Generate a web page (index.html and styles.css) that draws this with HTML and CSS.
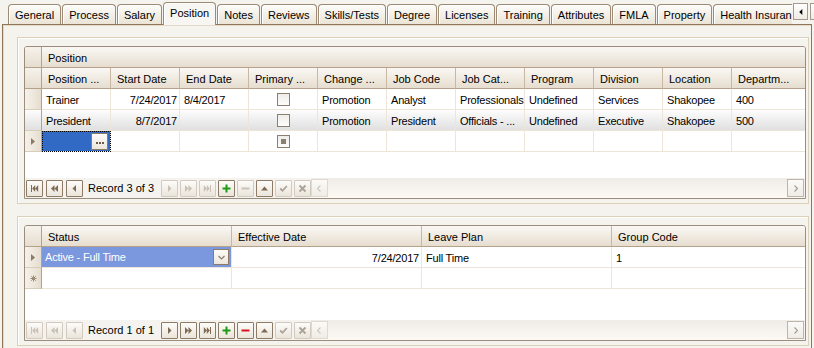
FILE: index.html
```html
<!DOCTYPE html>
<html lang="en">
<head>
    <meta charset="UTF-8">
    <title>Employee - Position</title>
    <link rel="stylesheet" href="styles.css">
</head>
<body>
    <div class="tabstrip">
        <div class="tabs">
            <div class="tab">General</div>
            <div class="tab">Process</div>
            <div class="tab">Salary</div>
            <div class="tab active">Position</div>
            <div class="tab">Notes</div>
            <div class="tab">Reviews</div>
            <div class="tab">Skills/Tests</div>
            <div class="tab">Degree</div>
            <div class="tab">Licenses</div>
            <div class="tab">Training</div>
            <div class="tab">Attributes</div>
            <div class="tab">FMLA</div>
            <div class="tab">Property</div>
            <div class="tab">Health Insurance</div>
        </div>
        <div class="tab-scroll">
            <span class="scroll-btn"><svg viewBox="0 0 9 9"><path d="M6 1v7L2.5 4.5z"/></svg></span>
            <span class="scroll-btn"></span>
        </div>
    </div>

    <div class="panel">
        <!-- position history -->
        <div class="groupbox">
            <div class="grid grid-position">
                <div class="sheet">
                    <div class="row">
                        <div class="cell head ind"></div>
                        <div class="cell head band">Position</div>
                    </div>
                    <div class="row">
                        <div class="cell head ind"></div>
                        <div class="cell head">Position ...</div>
                        <div class="cell head">Start Date</div>
                        <div class="cell head">End Date</div>
                        <div class="cell head">Primary ...</div>
                        <div class="cell head">Change ...</div>
                        <div class="cell head">Job Code</div>
                        <div class="cell head">Job Cat...</div>
                        <div class="cell head">Program</div>
                        <div class="cell head">Division</div>
                        <div class="cell head">Location</div>
                        <div class="cell head">Departm...</div>
                    </div>
                    <div class="row">
                        <div class="cell ind"></div>
                        <div class="cell">Trainer</div>
                        <div class="cell num">7/24/2017</div>
                        <div class="cell">8/4/2017</div>
                        <div class="cell center"><span class="check"></span></div>
                        <div class="cell">Promotion</div>
                        <div class="cell">Analyst</div>
                        <div class="cell">Professionals</div>
                        <div class="cell">Undefined</div>
                        <div class="cell">Services</div>
                        <div class="cell">Shakopee</div>
                        <div class="cell">400</div>
                    </div>
                    <div class="row hot">
                        <div class="cell ind"></div>
                        <div class="cell">President</div>
                        <div class="cell num">8/7/2017</div>
                        <div class="cell"></div>
                        <div class="cell center"><span class="check"></span></div>
                        <div class="cell">Promotion</div>
                        <div class="cell">President</div>
                        <div class="cell">Officials - ...</div>
                        <div class="cell">Undefined</div>
                        <div class="cell">Executive</div>
                        <div class="cell">Shakopee</div>
                        <div class="cell">500</div>
                    </div>
                    <div class="row">
                        <div class="cell ind"><svg class="arrow" viewBox="0 0 4 7"><path d="M0 0l4 3.5L0 7z"/></svg></div>
                        <div class="cell current"><span class="ellipsis"><i></i><i></i><i></i></span></div>
                        <div class="cell"></div>
                        <div class="cell"></div>
                        <div class="cell center"><span class="check mixed"><i></i></span></div>
                        <div class="cell"></div>
                        <div class="cell"></div>
                        <div class="cell"></div>
                        <div class="cell"></div>
                        <div class="cell"></div>
                        <div class="cell"></div>
                        <div class="cell"></div>
                    </div>
                </div>
                <div class="fill"></div>
                <div class="navigator">
                    <span class="nav-btn"><svg viewBox="0 0 9 9"><path d="M1 1h1v7H1z M5.2 1v7L2.2 4.5z M8.2 1v7L5.2 4.5z"/></svg></span>
                    <span class="nav-btn"><svg viewBox="0 0 9 9"><path d="M4.5 1v7L1 4.5z M8 1v7L4.5 4.5z"/></svg></span>
                    <span class="nav-btn"><svg viewBox="0 0 9 9"><path d="M6 1v7L2.5 4.5z"/></svg></span>
                    <span class="nav-text">Record 3 of 3</span>
                    <span class="nav-btn off"><svg viewBox="0 0 9 9"><path d="M3 1v7l3.5-3.5z"/></svg></span>
                    <span class="nav-btn off"><svg viewBox="0 0 9 9"><path d="M1 1v7l3.5-3.5z M4.5 1v7L8 4.5z"/></svg></span>
                    <span class="nav-btn off"><svg viewBox="0 0 9 9"><path d="M0.8 1v7l3-3.5z M3.8 1v7l3-3.5z M7 1h1v7H7z"/></svg></span>
                    <span class="nav-btn add"><svg viewBox="0 0 9 9"><path d="M3.5 0.5h2v8h-2z M0.5 3.5h8v2h-8z"/></svg></span>
                    <span class="nav-btn off"><svg viewBox="0 0 9 9"><path d="M0.5 3.5h8v2h-8z"/></svg></span>
                    <span class="nav-btn"><svg viewBox="0 0 9 9"><path d="M4.5 2.5L8 6.5H1z"/></svg></span>
                    <span class="nav-btn off dim"><svg viewBox="0 0 9 9"><path class="stroke" d="M1.2 4.5l2.3 2.3 4.3-4.8"/></svg></span>
                    <span class="nav-btn off dim"><svg viewBox="0 0 9 9"><path class="stroke" d="M1.5 1.5l6 6M7.5 1.5l-6 6"/></svg></span>
                    <div class="hscroll">
                        <span class="hs-btn off"><svg viewBox="0 0 9 9"><path class="stroke thin" d="M5.5 1.5l-3 3 3 3"/></svg></span>
                        <span class="hs-track"></span>
                        <span class="hs-btn"><svg viewBox="0 0 9 9"><path class="stroke thin" d="M3.5 1.5l3 3-3 3"/></svg></span>
                    </div>
                </div>
            </div>
        </div>

        <!-- status history -->
        <div class="groupbox">
            <div class="grid grid-status">
                <div class="sheet">
                    <div class="row">
                        <div class="cell head ind"></div>
                        <div class="cell head">Status</div>
                        <div class="cell head">Effective Date</div>
                        <div class="cell head">Leave Plan</div>
                        <div class="cell head">Group Code</div>
                    </div>
                    <div class="row">
                        <div class="cell ind"><svg class="arrow" viewBox="0 0 4 7"><path d="M0 0l4 3.5L0 7z"/></svg></div>
                        <div class="cell picked">
                            <span>Active - Full Time</span>
                            <span class="dropdown"><svg viewBox="0 0 9 9"><path class="stroke thin" d="M1.5 3l3 3 3-3"/></svg></span>
                        </div>
                        <div class="cell num">7/24/2017</div>
                        <div class="cell">Full Time</div>
                        <div class="cell">1</div>
                    </div>
                    <div class="row">
                        <div class="cell ind"><svg class="star" viewBox="0 0 7 7"><path d="M3.5 0.5v6M0.5 3.5h6M1.3 1.3l4.4 4.4M5.7 1.3l-4.4 4.4"/></svg></div>
                        <div class="cell"></div>
                        <div class="cell"></div>
                        <div class="cell"></div>
                        <div class="cell"></div>
                    </div>
                </div>
                <div class="fill"></div>
                <div class="navigator">
                    <span class="nav-btn off"><svg viewBox="0 0 9 9"><path d="M1 1h1v7H1z M5.2 1v7L2.2 4.5z M8.2 1v7L5.2 4.5z"/></svg></span>
                    <span class="nav-btn off"><svg viewBox="0 0 9 9"><path d="M4.5 1v7L1 4.5z M8 1v7L4.5 4.5z"/></svg></span>
                    <span class="nav-btn off"><svg viewBox="0 0 9 9"><path d="M6 1v7L2.5 4.5z"/></svg></span>
                    <span class="nav-text">Record 1 of 1</span>
                    <span class="nav-btn"><svg viewBox="0 0 9 9"><path d="M3 1v7l3.5-3.5z"/></svg></span>
                    <span class="nav-btn"><svg viewBox="0 0 9 9"><path d="M1 1v7l3.5-3.5z M4.5 1v7L8 4.5z"/></svg></span>
                    <span class="nav-btn"><svg viewBox="0 0 9 9"><path d="M0.8 1v7l3-3.5z M3.8 1v7l3-3.5z M7 1h1v7H7z"/></svg></span>
                    <span class="nav-btn add"><svg viewBox="0 0 9 9"><path d="M3.5 0.5h2v8h-2z M0.5 3.5h8v2h-8z"/></svg></span>
                    <span class="nav-btn remove"><svg viewBox="0 0 9 9"><path d="M0.5 3.5h8v2h-8z"/></svg></span>
                    <span class="nav-btn"><svg viewBox="0 0 9 9"><path d="M4.5 2.5L8 6.5H1z"/></svg></span>
                    <span class="nav-btn off dim"><svg viewBox="0 0 9 9"><path class="stroke" d="M1.2 4.5l2.3 2.3 4.3-4.8"/></svg></span>
                    <span class="nav-btn off dim"><svg viewBox="0 0 9 9"><path class="stroke" d="M1.5 1.5l6 6M7.5 1.5l-6 6"/></svg></span>
                    <div class="hscroll">
                        <span class="hs-btn off"><svg viewBox="0 0 9 9"><path class="stroke thin" d="M5.5 1.5l-3 3 3 3"/></svg></span>
                        <span class="hs-track"></span>
                        <span class="hs-btn"><svg viewBox="0 0 9 9"><path class="stroke thin" d="M3.5 1.5l3 3-3 3"/></svg></span>
                    </div>
                </div>
            </div>
        </div>
    </div>
</body>
</html>
```

FILE: styles.css
```css
* {
    margin: 0;
    padding: 0;
    box-sizing: border-box;
}

body {
    font-family: "Liberation Sans", Arial, sans-serif;
    font-size: 11px;
    color: #000;
    background: #f4f3ee;
    width: 814px;
    height: 348px;
    overflow: hidden;
}

/* tab strip */
.tabstrip {
    display: flex;
    height: 25px;
    padding-left: 8px;
    position: relative;
    z-index: 1;
}

.tabs {
    flex: none;
    display: flex;
    align-items: flex-end;
    gap: 1px;
    width: 784px;
    overflow: hidden;
}

.tab {
    flex: none;
    height: 20px;
    margin-bottom: 1px;
    padding: 0 6px;
    line-height: 20px;
    border: 1px solid #9d8a74;
    border-bottom: none;
    border-radius: 4px 4px 0 0;
    background: linear-gradient(#fdfcf9, #ebe4d6);
    box-shadow: inset 1px 1px #fff;
    white-space: nowrap;
}

.tab.active {
    height: 23px;
    margin-bottom: 0;
    line-height: 21px;
    background: #f7f6f2;
}

.tab-scroll {
    flex: none;
    display: flex;
    gap: 2px;
    margin: 3px 0 0 1px;
}

.scroll-btn {
    width: 15px;
    height: 17px;
    border: 1px solid #a59a8d;
    background: linear-gradient(#fff, #efebe4);
    display: flex;
    align-items: center;
    justify-content: center;
}

.scroll-btn svg {
    width: 8px;
    height: 8px;
    fill: #000;
}

/* panel */
.panel {
    margin: -1px 0 0 2px;
    width: 810px;
    height: 324px;
    border: 1px solid #8f7659;
    border-bottom: none;
    box-shadow: inset 1px 1px #e4d9c7;
    padding: 12px 0 0 14px;
    background: #f4f3ee;
}

.groupbox {
    width: 792px;
    border: 1px solid #ddd0b9;
    box-shadow: inset 1px 1px #fff;
    padding: 8px 2px 4px 6px;
}

.groupbox + .groupbox {
    margin-top: 12px;
}

/* grids */
.grid {
    width: 782px;
    border: 1px solid #9b8d7e;
    border-radius: 3px 3px 0 0;
    background: #fff;
    display: flex;
    flex-direction: column;
    overflow: hidden;
}

.grid-position {
    height: 153px;
}

.grid-status {
    height: 116px;
}

.sheet {
    display: grid;
    grid-auto-rows: 21px;
}

.grid-position .sheet {
    grid-template-columns: 17px repeat(10, 69px) 73px;
}

.grid-status .sheet {
    grid-template-columns: 17px 190px 190px 190px 193px;
}

.row {
    display: contents;
}

.cell {
    border-right: 1px solid #eee5d9;
    border-bottom: 1px solid #eee5d9;
    padding: 2px 4px 0;
    line-height: 18px;
    letter-spacing: -0.2px;
    white-space: nowrap;
    overflow: hidden;
}

.row > .cell:last-child {
    border-right: none;
}

.cell.head {
    background: linear-gradient(#faf8f4, #e6ddcf);
    border-right-color: #c9b8a1;
    border-bottom-color: #b4a28b;
    padding-left: 6px;
    letter-spacing: 0;
}

.band {
    grid-column: 2 / -1;
}

.cell.ind {
    padding: 0;
    background: linear-gradient(to right, #f6f2eb, #e6ddcf);
    border-right-color: #b4a28b;
    border-bottom-color: #d8ccba;
    display: flex;
    align-items: center;
    justify-content: center;
}

.cell.head.ind {
    background: linear-gradient(#f6f2eb, #e6ddcf);
    border-bottom-color: #b4a28b;
}

.num {
    text-align: right;
    padding-right: 2px;
}

.center {
    display: flex;
    align-items: center;
    justify-content: center;
    padding: 0;
}

.hot .cell {
    background: linear-gradient(#fdfdfd, #e1e0e1);
}

.arrow {
    width: 4px;
    height: 7px;
    fill: #8a7a68;
}

.star {
    width: 7px;
    height: 7px;
    stroke: #9a8b79;
    stroke-width: 1;
    fill: none;
}

.check {
    width: 13px;
    height: 13px;
    border: 1px solid #8c7f70;
    background: linear-gradient(#efede8, #fdfdfc);
    display: flex;
    align-items: center;
    justify-content: center;
}

.check.mixed i {
    width: 5px;
    height: 5px;
    background: #8c7f70;
}

.cell.current {
    background: #316ac5;
    outline: 1px dotted #000;
    outline-offset: -1px;
    display: flex;
    align-items: center;
    justify-content: flex-end;
    padding: 0 2px 0 0;
}

.ellipsis {
    width: 17px;
    height: 17px;
    border: 1px solid #8e7b66;
    background: linear-gradient(#fdfcfa, #ece6dc);
    display: flex;
    align-items: center;
    justify-content: center;
    gap: 1px;
    padding-top: 3px;
}

.ellipsis i {
    width: 2px;
    height: 2px;
    background: #6d5c4a;
}

.cell.picked {
    background: #7b97dd;
    color: #fff;
    display: flex;
    align-items: center;
    justify-content: space-between;
    padding: 0 2px 0 3px;
}

.dropdown {
    width: 16px;
    height: 16px;
    border: 1px solid #8e7b66;
    background: linear-gradient(#fdfcfa, #ece6dc);
    display: flex;
    align-items: center;
    justify-content: center;
}

.dropdown svg {
    width: 9px;
    height: 9px;
    color: #8a7a68;
}

.fill {
    flex: 1;
}

/* navigator */
.navigator {
    height: 20px;
    display: flex;
    align-items: center;
    padding-left: 1px;
    background: #f4f3ef;
}

.nav-btn {
    flex: none;
    width: 17px;
    height: 17px;
    margin-right: 2px;
    border: 1px solid #8e7b66;
    border-radius: 1px;
    background: linear-gradient(#fdfcfa, #ebe5da);
    display: flex;
    align-items: center;
    justify-content: center;
    color: #7f6a55;
}

.nav-btn:nth-child(-n+2) {
    margin-right: 3px;
}

.nav-btn.off {
    border-color: #d3cabf;
    color: #c9c1b7;
}

.nav-btn.dim {
    color: #aaa39a;
}

.nav-btn.add {
    color: #1e9a14;
}

.nav-btn.remove {
    color: #d8141e;
}

.nav-btn svg {
    width: 9px;
    height: 9px;
    fill: currentColor;
}

.stroke {
    fill: none;
    stroke: currentColor;
    stroke-width: 1.8;
}

.stroke.thin {
    stroke-width: 1.1;
}

.nav-text {
    margin: 0 7px 0 3px;
    white-space: nowrap;
}

.hscroll {
    flex: 1;
    height: 20px;
    margin-left: -2px;
    margin-right: 1px;
    display: flex;
    align-items: center;
    background: linear-gradient(#efece8, #fdfaf6);
}

.hs-track {
    flex: 1;
}

.hs-btn {
    width: 17px;
    height: 18px;
    border: 1px solid #bdb4aa;
    background: linear-gradient(#fbfaf8, #f0ece6);
    display: flex;
    align-items: center;
    justify-content: center;
    color: #a39b91;
}

.hs-btn.off {
    border-color: #e0d9d0;
    color: #cdc6bd;
}

.hs-btn svg {
    width: 9px;
    height: 9px;
}
```
